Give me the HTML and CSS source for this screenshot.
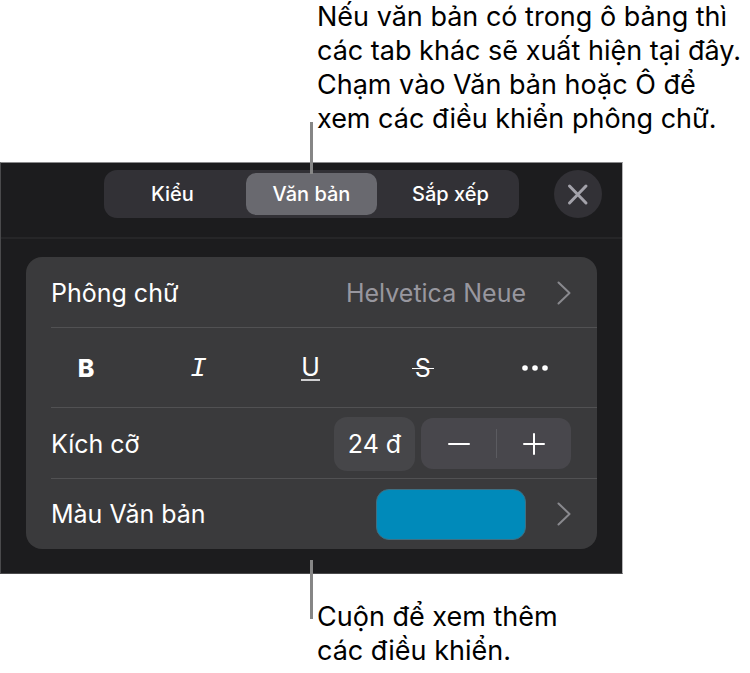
FILE: index.html
```html
<!DOCTYPE html>
<html lang="vi">
<head>
<meta charset="utf-8">
<meta name="viewport" content="width=device-width, initial-scale=1">
<title>Điều khiển văn bản</title>
<link rel="stylesheet" href="styles.css">
</head>
<body>
<main class="figure">
  <p class="callout callout-top">Nếu văn bản có trong ô bảng thì<br>các tab khác sẽ xuất hiện tại đây.<br>Chạm vào Văn bản hoặc Ô để<br>xem các điều khiển phông chữ.</p>

  <section class="panel">
    <span class="leader leader-top"></span>
    <header class="panel-header">
      <div class="segments" role="tablist">
        <button class="segment" type="button" role="tab" aria-selected="false">Kiểu</button>
        <button class="segment segment-active" type="button" role="tab" aria-selected="true">Văn bản</button>
        <button class="segment" type="button" role="tab" aria-selected="false">Sắp xếp</button>
      </div>
      <button class="close" type="button" aria-label="Đóng">
        <svg width="48" height="48" viewBox="0 0 48 48"><path d="M15.5 16 32 33M32 16 15.5 33"/></svg>
      </button>
    </header>

    <div class="card">
      <button class="row font-row" type="button">
        <span class="label">Phông chữ</span>
        <span class="value">Helvetica Neue</span>
        <svg class="chevron" width="14" height="24" viewBox="0 0 14 24"><path d="M1.5 1.5 12.5 12 1.5 22.5"/></svg>
      </button>
      <div class="formats">
        <button class="format bold" type="button">B</button>
        <button class="format italic" type="button">I</button>
        <button class="format underline" type="button"><span>U</span></button>
        <button class="format strike" type="button"><span>S</span></button>
        <button class="format" type="button" aria-label="Thêm">
          <svg width="28" height="8" viewBox="0 0 28 8"><circle cx="4" cy="4" r="2.8"/><circle cx="14" cy="4" r="2.8"/><circle cx="24" cy="4" r="2.8"/></svg>
        </button>
      </div>
      <div class="row">
        <label class="label" for="size">Kích cỡ</label>
        <input class="size" id="size" type="text" value="24 đ">
        <div class="stepper">
          <button class="step" type="button" aria-label="Giảm"><svg width="24" height="24" viewBox="0 0 24 24"><path d="M2 12H22"/></svg></button>
          <button class="step" type="button" aria-label="Tăng"><svg width="24" height="24" viewBox="0 0 24 24"><path d="M2 12H22M12 2V22"/></svg></button>
        </div>
      </div>
      <div class="row">
        <span class="label" id="color-label">Màu Văn bản</span>
        <button class="swatch" type="button" aria-labelledby="color-label"></button>
        <svg class="chevron" width="14" height="24" viewBox="0 0 14 24"><path d="M1.5 1.5 12.5 12 1.5 22.5"/></svg>
      </div>
    </div>
    <span class="leader leader-bottom"></span>
  </section>

  <p class="callout callout-bottom">Cuộn để xem thêm<br>các điều khiển.</p>
</main>
</body>
</html>
```
FILE: styles.css
```css
* {
  box-sizing: border-box;
}

body {
  margin: 0;
  background: #fff;
  color: #000;
  font-family: Inter, "Liberation Sans", sans-serif;
  font-size: 27px;
}

button,
input {
  margin: 0;
  padding: 0;
  border: 0;
  background: none;
  color: inherit;
  font: inherit;
}

svg {
  display: block;
  fill: none;
  stroke: currentColor;
  stroke-linecap: round;
  stroke-linejoin: round;
}

.callout {
  margin: 0 0 0 317px;
  line-height: 34px;
  white-space: nowrap;
}

.callout-top {
  padding-bottom: 26px;
}

.callout-bottom {
  padding-top: 26px;
}

.panel {
  position: relative;
  margin-right: 127px;
  padding-bottom: 24px;
  border: 1px solid #4a4a4c;
  border-top-color: #8a8a8c;
  border-right-color: #b4b4b6;
  background: #1c1c1e;
  color: #fff;
}

.leader {
  position: absolute;
  left: 50%;
  width: 3px;
  margin-left: -2px;
  background: #868686;
}

.leader-top {
  top: -41px;
  height: 52px;
}

.leader-bottom {
  bottom: -46px;
  height: 59px;
}

.panel-header {
  display: flex;
  gap: 35px;
  padding: 7px 20px 19px 103px;
  border-bottom: 2px solid #262628;
}

.segments {
  display: grid;
  flex: 1;
  grid-template-columns: repeat(3, 1fr);
  gap: 8px;
  padding: 3px;
  border-radius: 13px;
  background: #323136;
}

.segment {
  border-radius: 10px;
  font-size: 20px;
  font-weight: 500;
}

.segment-active {
  background: #69696f;
}

.close {
  width: 48px;
  height: 48px;
  border-radius: 50%;
  background: #323136;
  color: #a3a2aa;
  stroke-width: 3px;
}

.card {
  margin: 18px 25px 0;
  border-radius: 16px;
  background: #3a3a3c;
  font-size: 25px;
}

.row {
  position: relative;
  display: flex;
  align-items: center;
  width: 100%;
  height: 71px;
  padding: 0 26px 0 25px;
  text-align: left;
}

.row::after,
.formats::after {
  content: "";
  position: absolute;
  right: 0;
  bottom: 0;
  left: 25px;
  height: 1px;
  background: #515153;
}

.row:last-child {
  height: 70px;
}

.row:last-child::after {
  display: none;
}

.label {
  flex: 1;
}

.value {
  color: #98979f;
}

.chevron {
  margin-left: 31px;
  color: #89898e;
  stroke-width: 2px;
}

.formats {
  position: relative;
  display: grid;
  grid-template-columns: repeat(5, 1fr);
  height: 80px;
  padding: 0 6px 0 4px;
}

.format {
  display: flex;
  align-items: center;
  justify-content: center;
}

.format svg {
  fill: currentColor;
  stroke: none;
}

.bold {
  font-weight: 800;
}

.italic {
  font-family: "Liberation Mono", monospace;
  font-size: 28px;
  font-style: italic;
}

.underline span {
  border-bottom: 2px solid #cfcfd1;
  line-height: 24px;
}

.strike span {
  padding: 0 3px;
  background: linear-gradient(currentColor, currentColor) center / 100% 1px no-repeat;
}

.size {
  width: 81px;
  height: 54px;
  border-radius: 13px;
  background: #464649;
  text-align: center;
}

.stepper {
  display: flex;
  width: 150px;
  height: 51px;
  margin-left: 6px;
  border-radius: 12px;
  background: #48474c;
}

.step {
  display: flex;
  flex: 1;
  align-items: center;
  justify-content: center;
  stroke-width: 2px;
}

.step + .step::before {
  content: "";
  position: absolute;
  width: 1px;
  height: 29px;
  margin-right: 75px;
  background: #5b5b60;
}

.swatch {
  width: 150px;
  height: 51px;
  border: 1px solid #3f6f82;
  border-radius: 13px;
  background: #008aba;
}
```
